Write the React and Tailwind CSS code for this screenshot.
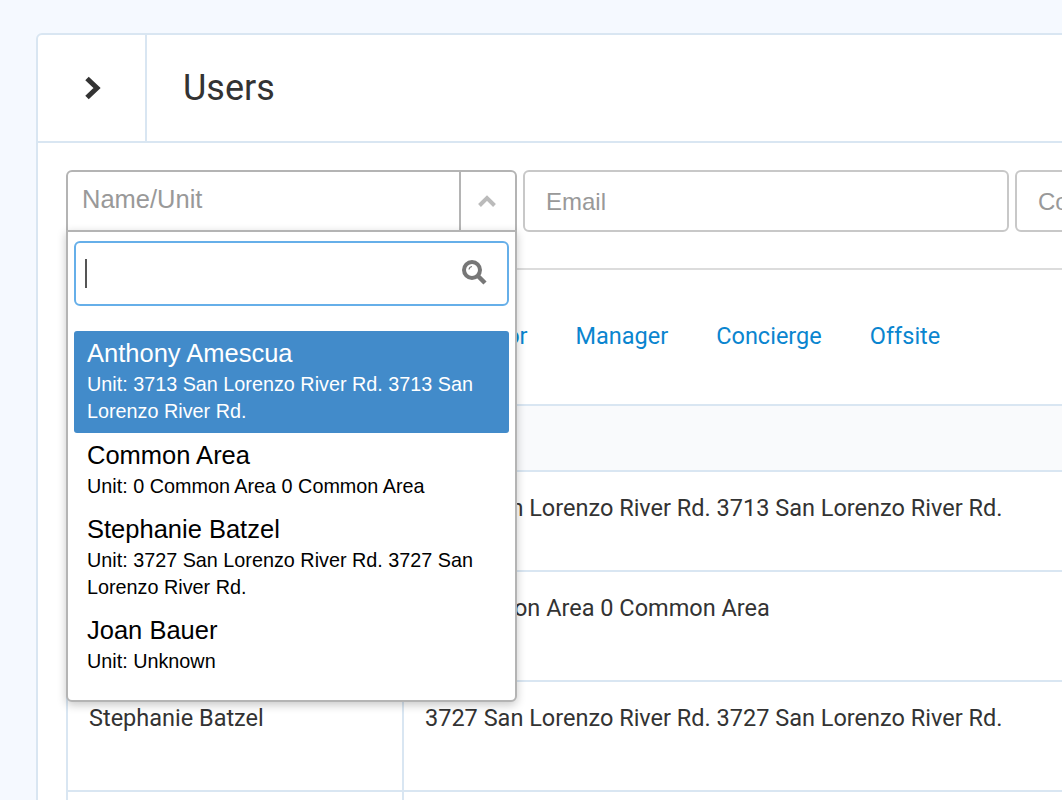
const tabs = ["All", "Resident", "Owner", "Supervisor", "Manager", "Concierge", "Offsite"];

const options = [
  { name: "Anthony Amescua", unit: "Unit: 3713 San Lorenzo River Rd. 3713 San Lorenzo River Rd.", active: true },
  { name: "Common Area", unit: "Unit: 0 Common Area 0 Common Area" },
  { name: "Stephanie Batzel", unit: "Unit: 3727 San Lorenzo River Rd. 3727 San Lorenzo River Rd." },
  { name: "Joan Bauer", unit: "Unit: Unknown" },
];

const rows = [
  { name: "Anthony Amescua", unit: "3713 San Lorenzo River Rd. 3713 San Lorenzo River Rd.", height: "h-[100px]" },
  { name: "Common Area", unit: "0 Common Area 0 Common Area", height: "h-[110px]" },
  { name: "Stephanie Batzel", unit: "3727 San Lorenzo River Rd. 3727 San Lorenzo River Rd.", height: "h-[110px]" },
  { name: "Joan Bauer", unit: "Unknown", height: "h-[110px]" },
];

const Dropdown = () => (
  <div className="absolute left-0 top-[60px] z-10 w-[451px] h-[472px] bg-white border-2 border-[#b4b4b4] rounded-b-[6px] shadow-[0_3px_10px_rgba(0,0,0,0.22)] px-[6px] pt-[9px] font-['Liberation_Sans',sans-serif]">
    <div className="flex items-center justify-between h-[65px] border-2 border-[#66afe9] rounded-[6px] pl-[9px] pr-[20px]">
      <span className="block w-[2px] h-[29px] bg-[#555]" />
      <svg width="26" height="26" viewBox="0 0 26 26" fill="none" stroke="#777" strokeWidth="4" className="mb-[3px]">
        <circle cx="11" cy="11" r="8" />
        <path d="M17 17l7 7" strokeWidth="4.5" />
        <path d="M8 10.5a3.5 3.5 0 0 1 3-3" strokeWidth="1.2" />
      </svg>
    </div>
    <ul className="mt-[25px]">
      {options.map((o) => (
        <li
          key={o.name}
          className={`pl-[13px] pr-[20px] pt-[6px] rounded-[3px] ${o.active ? "pb-[8px] bg-[#428bca] text-white" : "pb-[7px] text-black"}`}
        >
          <p className="text-[25.5px] leading-[32px] mb-[2px]">{o.name}</p>
          <p className="text-[19.8px] leading-[27px]">{o.unit}</p>
        </li>
      ))}
    </ul>
  </div>
);

export default function App() {
  return (
    <div className="h-screen overflow-hidden bg-[#f5f9ff] pt-[33px] pl-[36px] text-[#333] font-['Roboto',sans-serif]">
      <div className="w-[1300px] h-[900px] bg-white border-2 border-[#d9e6f2] rounded-[6px]">
        <header className="flex h-[108px] border-b-2 border-[#d9e6f2]">
          <div className="flex w-[109px] items-center justify-center border-r-2 border-[#d9e6f2]">
            <svg width="18" height="24" viewBox="0 0 18 24" fill="none" stroke="#333" strokeWidth="5" className="ml-[3px]">
              <path d="M3 2.5l10 9.5-10 9.5" />
            </svg>
          </div>
          <h1 className="pl-[36px] text-[36px] leading-[106px]">Users</h1>
        </header>

        <div className="pl-[28px] pt-[27px]">
          <div className="flex gap-[6px] pb-[36px] border-b-2 border-[#dcdcdc] relative">
            <div className="relative flex w-[451px] h-[62px] border-2 border-[#b4b4b4] rounded-t-[6px] font-['Liberation_Sans',sans-serif]">
              <span className="flex-1 pl-[14px] text-[25.5px] leading-[55px] text-[#999]">Name/Unit</span>
              <span className="flex w-[56px] items-center justify-center border-l-2 border-[#b4b4b4] pr-[2px]">
                <svg width="18" height="12" viewBox="0 0 18 12" fill="none" stroke="#bbb" strokeWidth="4">
                  <path d="M1.5 10.5L9 3l7.5 7.5" />
                </svg>
              </span>
            </div>
            <Dropdown />
            <input
              placeholder="Email"
              className="w-[486px] h-[62px] border-2 border-[#c8c8c8] rounded-[6px] pl-[21px] pt-[2px] text-[24px] font-['Liberation_Sans',sans-serif] placeholder:text-[#999]"
            />
            <input
              placeholder="Company"
              className="w-[300px] h-[62px] border-2 border-[#c8c8c8] rounded-[6px] pl-[21px] pt-[2px] text-[24px] font-['Liberation_Sans',sans-serif] placeholder:text-[#999]"
            />
          </div>

          <nav className="flex items-center gap-[48px] h-[134px] pl-[21px] text-[23.5px] text-[#0a85cf]">
            {tabs.map((t) => (
              <a key={t}>{t}</a>
            ))}
          </nav>

          <div className="border-l-2 border-[#d9e6f2]">
            <div className="h-[68px] bg-[#f9fafc] border-y-2 border-[#d9e6f2]" />
            {rows.map((r) => (
              <div key={r.name} className={`flex text-[23.5px] leading-[32px] border-b-2 border-[#d9e6f2] ${r.height}`}>
                <div className="w-[336px] shrink-0 border-r-2 border-[#d9e6f2] pl-[21px] pt-[20px]">{r.name}</div>
                <div className="pl-[21px] pt-[20px]">{r.unit}</div>
              </div>
            ))}
          </div>
        </div>
      </div>
    </div>
  );
}
